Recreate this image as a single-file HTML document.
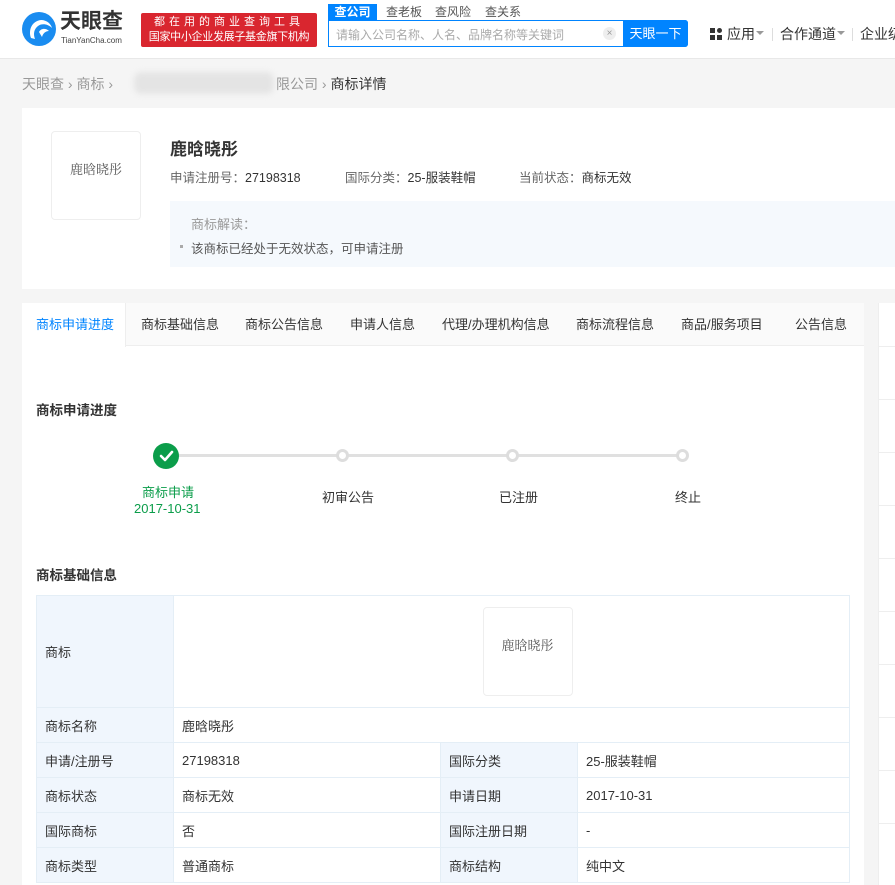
<!DOCTYPE html>
<html><head><meta charset="utf-8"><style>
*{margin:0;padding:0;box-sizing:border-box}
html{overflow:hidden;width:895px;height:885px}
body{width:895px;height:885px;overflow:hidden;background:#f5f5f5;font-family:"Liberation Sans","Noto Sans CJK SC",sans-serif;color:#333;position:relative;font-size:13px}
.a{position:absolute;white-space:nowrap}
.hdr{position:absolute;left:0;top:0;width:895px;height:59px;background:#fff;border-bottom:1px solid #e8e8e8}
.card{position:absolute;background:#fff}
table{border-collapse:collapse;position:absolute;left:36px;top:595px;width:814px}
td{border:1px solid #e4eef6;height:35px;padding:0 8px;font-size:13px;color:#333}
td.l{background:#f0f6fd;width:137px}
.dot{position:absolute;width:13px;height:13px;border:3px solid #ddd;border-radius:50%;background:#fff}
.clip{position:absolute;left:0;top:0;width:895px;height:885px;overflow:hidden}
</style></head><body><div class="clip">
<div class="hdr"></div>
<svg class="a" style="left:22px;top:12px" width="34" height="34" viewBox="0 0 34 34"><circle cx="17" cy="17" r="17" fill="#1a8cf0"/><path d="M9 26 C6 18 10 9 19 8 C25 8 29 12 30 16 C26 12 20 11 16 14 C12 17 11 22 13 27Z" fill="#fff"/><path d="M17 20 C19 16 24 16 27 19 C24 19 21 21 20 25Z" fill="#fff"/></svg>
<div class="a" style="left:60px;top:10px;font-size:21px;font-weight:bold;color:#333;letter-spacing:0px;line-height:24px">天眼查</div>
<div class="a" style="left:61px;top:36px;font-size:8px;color:#444;line-height:9px">TianYanCha.com</div>
<div class="a" style="left:141px;top:13px;width:176px;height:34px;background:#d9262f;border-radius:2px;color:#fff;font-size:11px;line-height:15px;text-align:center;padding-top:2px;overflow:hidden"><div style="letter-spacing:4px">都在用的商业查询工具</div><div style="letter-spacing:-0.3px">国家中小企业发展子基金旗下机构</div></div>
<div class="a" style="left:328px;top:4px;width:49px;height:16px;background:#0084ff;color:#fff;font-size:12px;text-align:center;line-height:16px;font-weight:bold">查公司</div>
<div class="a" style="left:386px;top:4px;font-size:12px;color:#555;line-height:16px">查老板</div>
<div class="a" style="left:435px;top:4px;font-size:12px;color:#555;line-height:16px">查风险</div>
<div class="a" style="left:485px;top:4px;font-size:12px;color:#555;line-height:16px">查关系</div>
<div class="a" style="left:328px;top:20px;width:360px;height:27px;border:1px solid #0084ff;border-radius:0 3px 3px 0;background:#fff"></div>
<div class="a" style="left:336px;top:26px;font-size:12px;color:#aaa">请输入公司名称、人名、品牌名称等关键词</div>
<div class="a" style="left:603px;top:27px;width:13px;height:13px;border-radius:50%;background:#eee;color:#999;font-size:10px;line-height:13px;text-align:center">×</div>
<div class="a" style="left:623px;top:20px;width:65px;height:27px;background:#0084ff;color:#fff;font-size:13px;text-align:center;line-height:27px;border-radius:0 3px 3px 0">天眼一下</div>
<svg class="a" style="left:710px;top:28px" width="12" height="12"><rect x="0" y="0" width="5" height="5" fill="#333"/><rect x="7" y="0" width="5" height="5" rx="2.5" fill="#333"/><rect x="0" y="7" width="5" height="5" fill="#333"/><rect x="7" y="7" width="5" height="5" fill="#333"/></svg>
<div class="a" style="left:727px;top:24px;font-size:14px;color:#333">应用</div>
<div class="a" style="left:756px;top:31px;border:4px solid transparent;border-top:4px solid #999"></div>
<div class="a" style="left:772px;top:28px;width:1px;height:13px;background:#ddd"></div>
<div class="a" style="left:780px;top:24px;font-size:14px;color:#333">合作通道</div>
<div class="a" style="left:837px;top:31px;border:4px solid transparent;border-top:4px solid #999"></div>
<div class="a" style="left:852px;top:28px;width:1px;height:13px;background:#ddd"></div>
<div class="a" style="left:860px;top:24px;font-size:14px;color:#333">企业级</div>

<div class="a" style="left:22px;top:74px;font-size:14px;color:#999">天眼查 › 商标 ›</div>
<div class="a" style="left:134px;top:72px;width:140px;height:22px;background:#e4e4e4;border-radius:8px;filter:blur(3px)"></div>
<div class="a" style="left:276px;top:74px;font-size:14px;color:#999">限公司 › <span style="color:#333">商标详情</span></div>

<div class="card" style="left:22px;top:108px;width:873px;height:181px"></div>
<div class="a" style="left:51px;top:131px;width:90px;height:89px;border:1px solid #eee;border-radius:4px;text-align:center;line-height:76px;font-size:13px;color:#555;font-family:'Liberation Serif','Noto Serif CJK SC',serif">鹿晗晓彤</div>
<div class="a" style="left:170px;top:135px;font-size:17px;font-weight:bold;color:#333">鹿晗晓彤</div>
<div class="a" style="left:170px;top:167px;font-size:12.5px;color:#666">申请注册号：<span style="color:#333">27198318</span></div>
<div class="a" style="left:345px;top:167px;font-size:12.5px;color:#666">国际分类：<span style="color:#333">25-服装鞋帽</span></div>
<div class="a" style="left:519px;top:167px;font-size:12.5px;color:#666">当前状态：<span style="color:#333">商标无效</span></div>
<div class="a" style="left:170px;top:201px;width:725px;height:66px;background:#f5f9fd"></div>
<div class="a" style="left:191px;top:214px;font-size:13px;color:#999">商标解读：</div>
<div class="a" style="left:180px;top:245px;width:3px;height:3px;background:#aaa"></div>
<div class="a" style="left:191px;top:238px;font-size:12.5px;color:#555">该商标已经处于无效状态，可申请注册</div>

<div class="card" style="left:22px;top:303px;width:842px;height:582px"></div>
<div class="a" style="left:22px;top:303px;width:842px;height:43px;background:#fafafa;border-bottom:1px solid #eee"></div>
<div class="a" style="left:22px;top:303px;width:104px;height:44px;background:#fff;border-right:1px solid #eee"></div>
<div class="a" style="left:36px;top:314px;font-size:13px;color:#0084ff">商标申请进度</div>
<div class="a" style="left:141px;top:314px;font-size:13px;color:#333">商标基础信息</div>
<div class="a" style="left:245px;top:314px;font-size:13px;color:#333">商标公告信息</div>
<div class="a" style="left:350px;top:314px;font-size:13px;color:#333">申请人信息</div>
<div class="a" style="left:442px;top:314px;font-size:13px;color:#333">代理/办理机构信息</div>
<div class="a" style="left:576px;top:314px;font-size:13px;color:#333">商标流程信息</div>
<div class="a" style="left:681px;top:314px;font-size:13px;color:#333">商品/服务项目</div>
<div class="a" style="left:795px;top:314px;font-size:13px;color:#333">公告信息</div>

<div class="a" style="left:36px;top:399px;font-size:13.5px;font-weight:bold;color:#333">商标申请进度</div>
<div class="a" style="left:170px;top:454px;width:512px;height:3px;background:#e0e0e0"></div>
<div class="a" style="left:153px;top:443px;width:26px;height:26px;border-radius:50%;background:#0b9d4a"></div>
<svg class="a" style="left:153px;top:443px" width="26" height="26"><path d="M8 13 L12 17 L19 9" stroke="#fff" stroke-width="2.6" fill="none" stroke-linecap="round" stroke-linejoin="round"/></svg>
<div class="dot" style="left:336px;top:449px"></div>
<div class="dot" style="left:506px;top:449px"></div>
<div class="dot" style="left:676px;top:449px"></div>
<div class="a" style="left:142px;top:482px;font-size:13px;color:#0b9d4a">商标申请</div>
<div class="a" style="left:134px;top:501px;font-size:13px;color:#0b9d4a">2017-10-31</div>
<div class="a" style="left:322px;top:487px;font-size:13px;color:#333">初审公告</div>
<div class="a" style="left:499px;top:487px;font-size:13px;color:#333">已注册</div>
<div class="a" style="left:675px;top:487px;font-size:13px;color:#333">终止</div>

<div class="a" style="left:36px;top:564px;font-size:13.5px;font-weight:bold;color:#333">商标基础信息</div>
<table>
<tr><td class="l" style="height:112px">商标</td><td colspan="3" style="text-align:center;padding-left:40px"><div style="display:inline-block;width:90px;height:89px;border:1px solid #eee;border-radius:4px;line-height:76px;color:#555;font-family:'Liberation Serif','Noto Serif CJK SC',serif">鹿晗晓彤</div></td></tr>
<tr><td class="l">商标名称</td><td colspan="3">鹿晗晓彤</td></tr>
<tr><td class="l">申请/注册号</td><td style="width:267px">27198318</td><td class="l">国际分类</td><td>25-服装鞋帽</td></tr>
<tr><td class="l">商标状态</td><td>商标无效</td><td class="l">申请日期</td><td>2017-10-31</td></tr>
<tr><td class="l">国际商标</td><td>否</td><td class="l">国际注册日期</td><td>-</td></tr>
<tr><td class="l">商标类型</td><td>普通商标</td><td class="l">商标结构</td><td>纯中文</td></tr>
</table>

<div class="card" style="left:878px;top:303px;width:17px;height:582px;border-left:1px solid #eee"></div>
<div class="a" style="left:878px;top:346px;width:17px;height:1px;background:#eee"></div>
<div class="a" style="left:878px;top:399px;width:17px;height:1px;background:#eee"></div>
<div class="a" style="left:878px;top:452px;width:17px;height:1px;background:#eee"></div>
<div class="a" style="left:878px;top:505px;width:17px;height:1px;background:#eee"></div>
<div class="a" style="left:878px;top:558px;width:17px;height:1px;background:#eee"></div>
<div class="a" style="left:878px;top:611px;width:17px;height:1px;background:#eee"></div>
<div class="a" style="left:878px;top:664px;width:17px;height:1px;background:#eee"></div>
<div class="a" style="left:878px;top:717px;width:17px;height:1px;background:#eee"></div>
<div class="a" style="left:878px;top:770px;width:17px;height:1px;background:#eee"></div>
<div class="a" style="left:878px;top:823px;width:17px;height:1px;background:#eee"></div>
</div></body></html>
